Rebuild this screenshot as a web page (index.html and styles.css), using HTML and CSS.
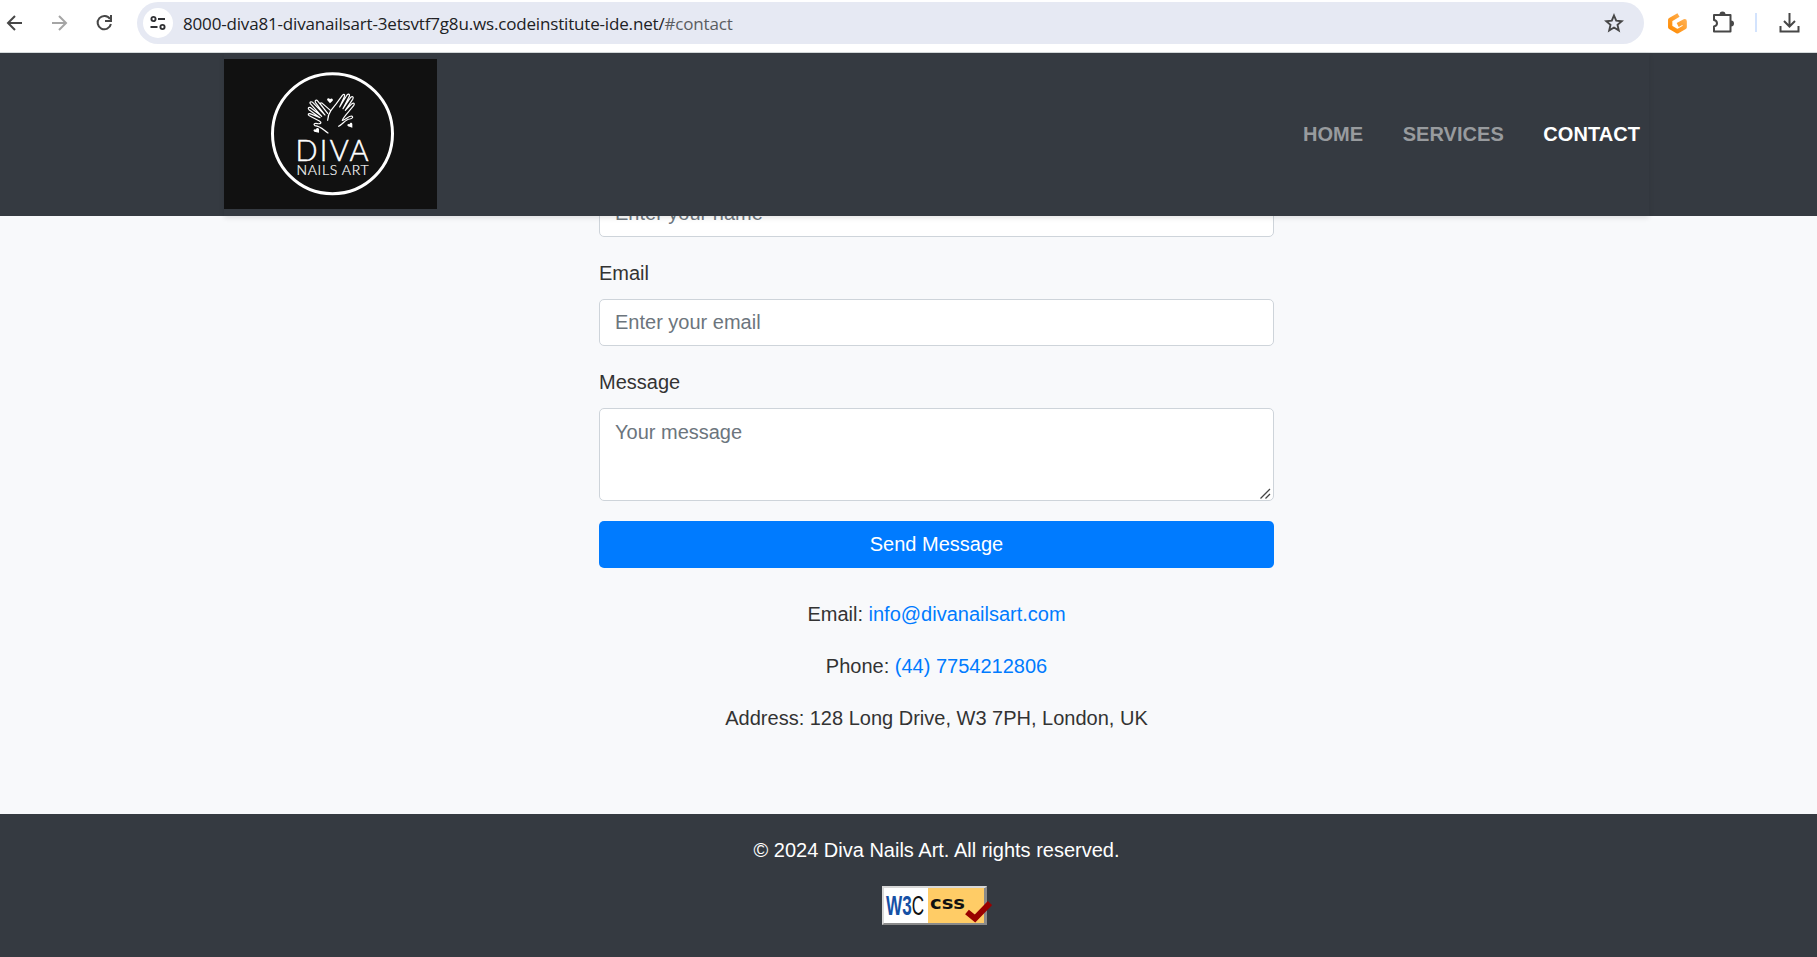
FILE: index.html
```html
<!DOCTYPE html>
<html lang="en">
<head>
<meta charset="utf-8">
<title>Diva Nails Art</title>
<link rel="stylesheet" href="styles.css">
</head>
<body>
<div class="toolbar">
  <svg class="nav-icons" width="137" height="52" viewBox="0 0 137 52" fill="none" stroke="#474747" stroke-width="2">
    <path d="M22 23H9M15 16l-7 7 7 7"/>
    <path stroke="#a5a5a5" d="M52 23h13M59 16l7 7-7 7"/>
    <path d="M110 19a6.700 6.700 0 1 0 .9 5M111 15v6h-6"/>
  </svg>
  <div class="omnibox">
    <span class="site-info">
      <svg width="18" height="16" viewBox="0 0 18 16" fill="none" stroke="#303134" stroke-width="1.900">
        <circle cx="4.500" cy="4" r="2.100"/><path d="M9 4h7M1.500 12h7"/><circle cx="13.500" cy="12" r="2.100"/>
      </svg>
    </span>
    <span class="url">8000-diva81-divanailsart-3etsvtf7g8u.ws.codeinstitute-ide.net/<span class="hash">#contact</span></span>
    <svg class="star" width="20" height="20" viewBox="0 0 20 20" fill="none" stroke="#474747" stroke-width="1.900">
      <path d="M10 2.500l2.200 5.200 5.600.5-4.300 3.700 1.300 5.500L10 14.500l-4.800 2.900 1.300-5.500-4.300-3.700 5.600-.5z"/>
    </svg>
  </div>
  <svg class="extensions" width="173" height="52" viewBox="1644 0 173 52" fill="none" stroke="#474747" stroke-width="2">
    <defs><linearGradient id="orange" x1="0" y1="1" x2="1" y2="0"><stop offset="0" stop-color="#ff8a00"/><stop offset="1" stop-color="#ffb45b"/></linearGradient></defs>
    <path stroke="url(#orange)" stroke-width="4.300" stroke-linejoin="round" d="M1678.500 15l-8.300 4.800v7.400l7.200 4.200 7.300-4.200v-6l-7 3.800"/>
    <path stroke-linejoin="round" d="M1714 15h16.500v16.500H1714v-5c4-1 4-5.500 0-6.500z"/>
    <path fill="#474747" stroke="none" d="M1719.500 14.500a3 3 0 0 1 6 0zM1731 20.500a3 3 0 0 1 0 6z"/>
    <path stroke="#d3e3fd" d="M1756 13v19"/>
    <path d="M1789.500 13v13M1784 21l5.500 5.500 5.500-5.500M1780.500 26v5.500h18V26"/>
  </svg>
</div>
<header class="header">
  <nav class="nav">
    <svg class="logo" width="213" height="150" viewBox="0 0 213 150">
      <rect width="213" height="150" fill="#111"/>
      <circle cx="108.500" cy="74.700" r="60" fill="none" stroke="#fff" stroke-width="3"/>
      <g transform="translate(76 26) scale(.3333)" fill="none" stroke="#fff" stroke-width="3.600" stroke-linecap="round" stroke-linejoin="round">
        <path d="M83 106c0-12 3-20 10-30l16-20 18-25c5-5 9-3 6 4l-14 31 22-36c5-5 9-2 7 4l-19 37 23-34c6-5 10-1 6 6l-22 33 20-20c6-4 9 0 5 6l-20 24c-8 10-12 14-14 20 10-2 18-13 28-13 6 3 2 8-6 9-12 1-20 15-33 22"/>
        <path d="M92 77L67 55c-6-3-8 1-4 5l20 25-29-36c-5-6-10-3-8 3l29 38-37-38c-6-4-10 0-7 4l34 38-33-26c-7-3-9 2-5 6l33 24-30-12c-6-1-7 3-2 6l30 16c8 5 5 9-5 8-8-3-15 1-8 6 18 2 26 14 39 22"/>
      </g>
      <g transform="translate(76 26) scale(.3333)" fill="#fff">
        <path id="heart" d="M90 55l-8-9c-3-6 5-9 8-3 4-6 11-1 8 4z"/>
        <path d="M57 143l-14-3c-6-4 0-9 5-6 0-7 8-6 9-1zM157 128l-13-4c-5-5 1-9 5-6 0-6 7-6 8-1z"/>
      </g>
      <g fill="#fff">
        <text class="logo-name" x="71.500" y="102" textLength="73">DIVA</text>
        <text class="logo-sub" x="72.500" y="116" textLength="72">NAILS ART</text>
      </g>
    </svg>
    <div class="links"><a>HOME</a><a>SERVICES</a><a class="active">CONTACT</a></div>
  </nav>
</header>
<main class="contact">
  <form class="form">
    <input class="control" type="text" placeholder="Enter your name">
    <label class="label" for="email">Email</label>
    <input class="control" id="email" type="email" placeholder="Enter your email">
    <label class="label" for="message">Message</label>
    <div class="message-wrap">
      <textarea class="control message" id="message" placeholder="Your message"></textarea>
      <svg class="grip" width="11" height="11" viewBox="0 0 11 11" stroke="#444" stroke-width="1.300"><path d="M.5 10.500l9.500-9.500M5.500 10.500L10 6"/></svg>
    </div>
    <button class="send" type="button">Send Message</button>
  </form>
  <div class="info">
    <p>Email: <a class="link">info@divanailsart.com</a></p>
    <p>Phone: <a class="link">(44) 7754212806</a></p>
    <p>Address: 128 Long Drive, W3 7PH, London, UK</p>
  </div>
</main>
<footer class="footer">
  <p>© 2024 Diva Nails Art. All rights reserved.</p>
  <svg class="badge" width="110" height="39" viewBox="0 0 110 39">
    <rect width="105" height="39" fill="#8a8a8a"/>
    <path fill="#d8d8d8" d="M0 0h105l-2 2H2v35l-2 2z"/>
    <path fill="#fff" d="M2 2h44v35H2z"/><path fill="#fc6" d="M46 2h56v35H46z"/>
    <text class="w3" x="4" y="28.500" textLength="38" lengthAdjust="spacingAndGlyphs">W3<tspan class="w3-c">C</tspan></text>
    <text class="css" x="48" y="23" textLength="35" lengthAdjust="spacingAndGlyphs">css</text>
    <path d="M85 26l8 6.500 15-15.500" fill="none" stroke="#900" stroke-width="6"/>
  </svg>
</footer>
</body>
</html>
```
FILE: styles.css
```css
* { box-sizing: border-box; }
body { margin: 0; width: 1817px; height: 957px; overflow: hidden; display: flex; flex-direction: column; font: 20px/32px "Liberation Sans", Arial, sans-serif; color: #333; background: #f8f9fb; }
p { margin: 0 0 20px; }

.toolbar { height: 53px; flex: none; display: flex; background: #fff; border-bottom: 1px solid #d5dadb; }
.nav-icons, .extensions { flex: none; }
.omnibox { width: 1507px; height: 42px; margin-top: 2px; padding: 0 20px 0 6px; display: flex; align-items: center; border-radius: 21px; background: #e6e9f3; }
.site-info { width: 30px; height: 30px; display: flex; align-items: center; justify-content: center; border-radius: 50%; background: #fff; }
.url { margin-left: 10px; padding-top: 2px; font-family: "Open Sans", sans-serif; font-size: 17px; letter-spacing: -.17px; color: #202124; white-space: nowrap; }
.hash { color: #5a5d61; }
.star { margin-left: auto; }

.header { position: relative; z-index: 1; height: 163px; flex: none; padding-left: 224px; background: #353a41; }
.nav { width: 1425px; height: 163px; padding: 0 9px 1px 0; display: flex; align-items: center; justify-content: space-between; box-shadow: 0 2px 5px rgba(0,0,0,.1); }
.logo-name { font: 300 29px Lato, sans-serif; stroke: #fff; stroke-width: .5px; }
.logo-sub { font: 300 14px Lato, sans-serif; stroke: #fff; stroke-width: .2px; }
.links { display: flex; gap: 39.500px; font-weight: bold; letter-spacing: .05px; color: #989b9e; }
.active { color: #fff; }

.contact { height: 598px; flex: none; margin-left: 599px; width: 675px; }
.form { display: flex; flex-direction: column; margin-top: -26px; }
.control { display: block; width: 100%; height: 47px; padding: 7px 15px; font: 20px/32px "Liberation Sans", Arial, sans-serif; color: #495057; background: #fff; border: 1px solid #ced4da; border-radius: 5px; }
.control::placeholder { color: #6c757d; opacity: 1; }
.label { margin: 20px 0 10px; }
.message-wrap { position: relative; }
.message { height: 93px; resize: none; }
.grip { position: absolute; right: 3px; bottom: 2px; }
.send { height: 47px; margin-top: 20px; padding: 0 0 2px; border: 0; border-radius: 5px; background: #007bff; color: #fff; font: 20px/30px "Liberation Sans", Arial, sans-serif; }
.info { margin-top: 30px; text-align: center; }
.link { color: #007bff; }

.footer { flex: 1; padding: 20px 0 0 599px; width: 1817px; display: flex; flex-direction: column; background: #353a41; color: #fff; }
.footer p { width: 675px; text-align: center; }
.badge { margin-left: 283px; }
.w3 { font: bold 27px "Liberation Sans", sans-serif; fill: #1550a5; }
.w3-c { fill: #111; font-weight: normal; }
.css { font: bold 18px "DejaVu Sans", sans-serif; fill: #111; }
```
